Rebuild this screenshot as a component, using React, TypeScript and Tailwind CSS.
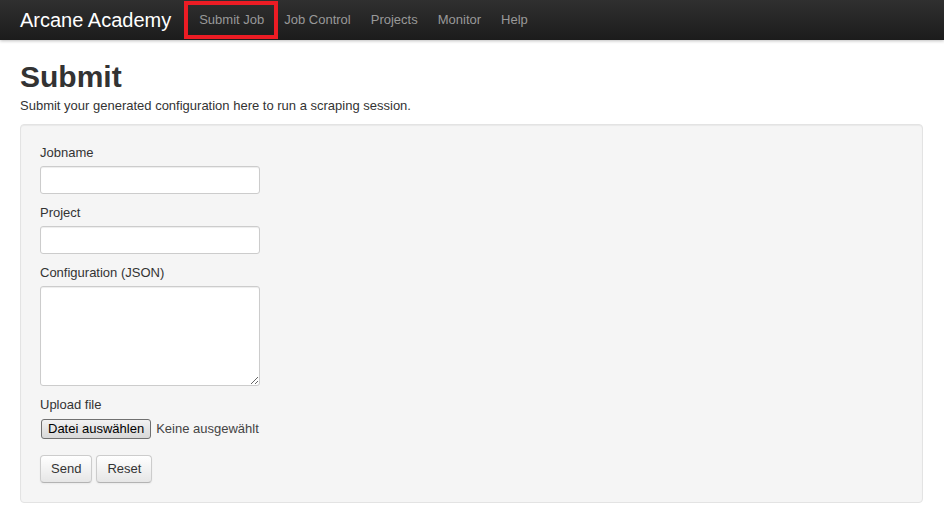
import React from "react"

const navItems = ["Submit Job", "Job Control", "Projects", "Monitor", "Help"]

function Field({ label, children }: { label: string; children: React.ReactNode }) {
	return (
		<div className="mb-[10px] flex flex-col">
			<label className="mb-[4px] text-[13px] leading-[18px] text-[#333]">{label}</label>
			{children}
		</div>
	)
}

const inputCls =
	"h-[28px] w-[220px] rounded-[3px] border border-[#ccc] bg-white px-[4px] text-[13px] shadow-[inset_0_1px_1px_rgba(0,0,0,0.075)] outline-none"

const btnCls =
	"h-[28px] rounded-[4px] border border-[#ccc] border-b-[#b3b3b3] bg-gradient-to-b from-white to-[#e6e6e6] px-[10px] text-[13px] leading-[18px] text-[#333] shadow-[inset_0_1px_0_rgba(255,255,255,0.2),0_1px_2px_rgba(0,0,0,0.05)]"

export default function App() {
	return (
		<div className="min-h-[520px] bg-white font-['Liberation_Sans',Arial,sans-serif] text-[#333]">
			{/* navbar */}
			<div className="relative flex h-10 items-center bg-gradient-to-b from-[#303030] to-[#1c1c1c] shadow-[0_1px_3px_rgba(0,0,0,0.25)]">
				<span className="pl-5 pr-[18px] text-[20px] leading-none text-white">Arcane Academy</span>
				<nav className="flex">
					{navItems.map((item) => (
						<a key={item} className="px-[10px] text-[13px] leading-[18px] text-[#999]">
							{item}
						</a>
					))}
				</nav>
				{/* highlight marker */}
				<div className="absolute left-[184px] top-[1px] h-[38px] w-[94px] border-[4px] border-[#ec1c24]" />
			</div>

			<div className="px-5">
				<h1 className="mt-[19px] text-[30px] font-bold leading-[36px] text-[#333]">Submit</h1>
				<p className="mt-[2px] text-[13px] leading-[18px]">
					Submit your generated configuration here to run a scraping session.
				</p>

				<div className="mt-[9px] mr-[1px] rounded-[4px] border border-[#e3e3e3] bg-[#f5f5f5] p-[19px] shadow-[inset_0_1px_1px_rgba(0,0,0,0.05)]">
					<Field label="Jobname">
						<input type="text" className={inputCls} />
					</Field>
					<Field label="Project">
						<input type="text" className={inputCls} />
					</Field>
					<Field label="Configuration (JSON)">
						<textarea className="h-[100px] w-[220px] rounded-[3px] border border-[#ccc] bg-white px-[4px] text-[13px] shadow-[inset_0_1px_1px_rgba(0,0,0,0.075)] outline-none" />
					</Field>
					<div className="flex flex-col">
						<label className="mb-[4px] text-[13px] leading-[18px] text-[#333]">Upload file</label>
						<div className="flex h-[22px] items-center">
							<span className="ml-[1px] flex h-[20px] items-center rounded-[3px] border border-[#707070] bg-gradient-to-b from-[#f2f2f2] to-[#d8d8d8] px-[6px] text-[13px] text-black">
								Datei auswählen
							</span>
							<span className="ml-[5px] text-[13px] text-[#444]">Keine ausgewählt</span>
						</div>
					</div>
					<div className="mt-[15px] flex gap-[4px]">
						<button className={btnCls}>Send</button>
						<button className={btnCls}>Reset</button>
					</div>
				</div>
			</div>
		</div>
	)
}
